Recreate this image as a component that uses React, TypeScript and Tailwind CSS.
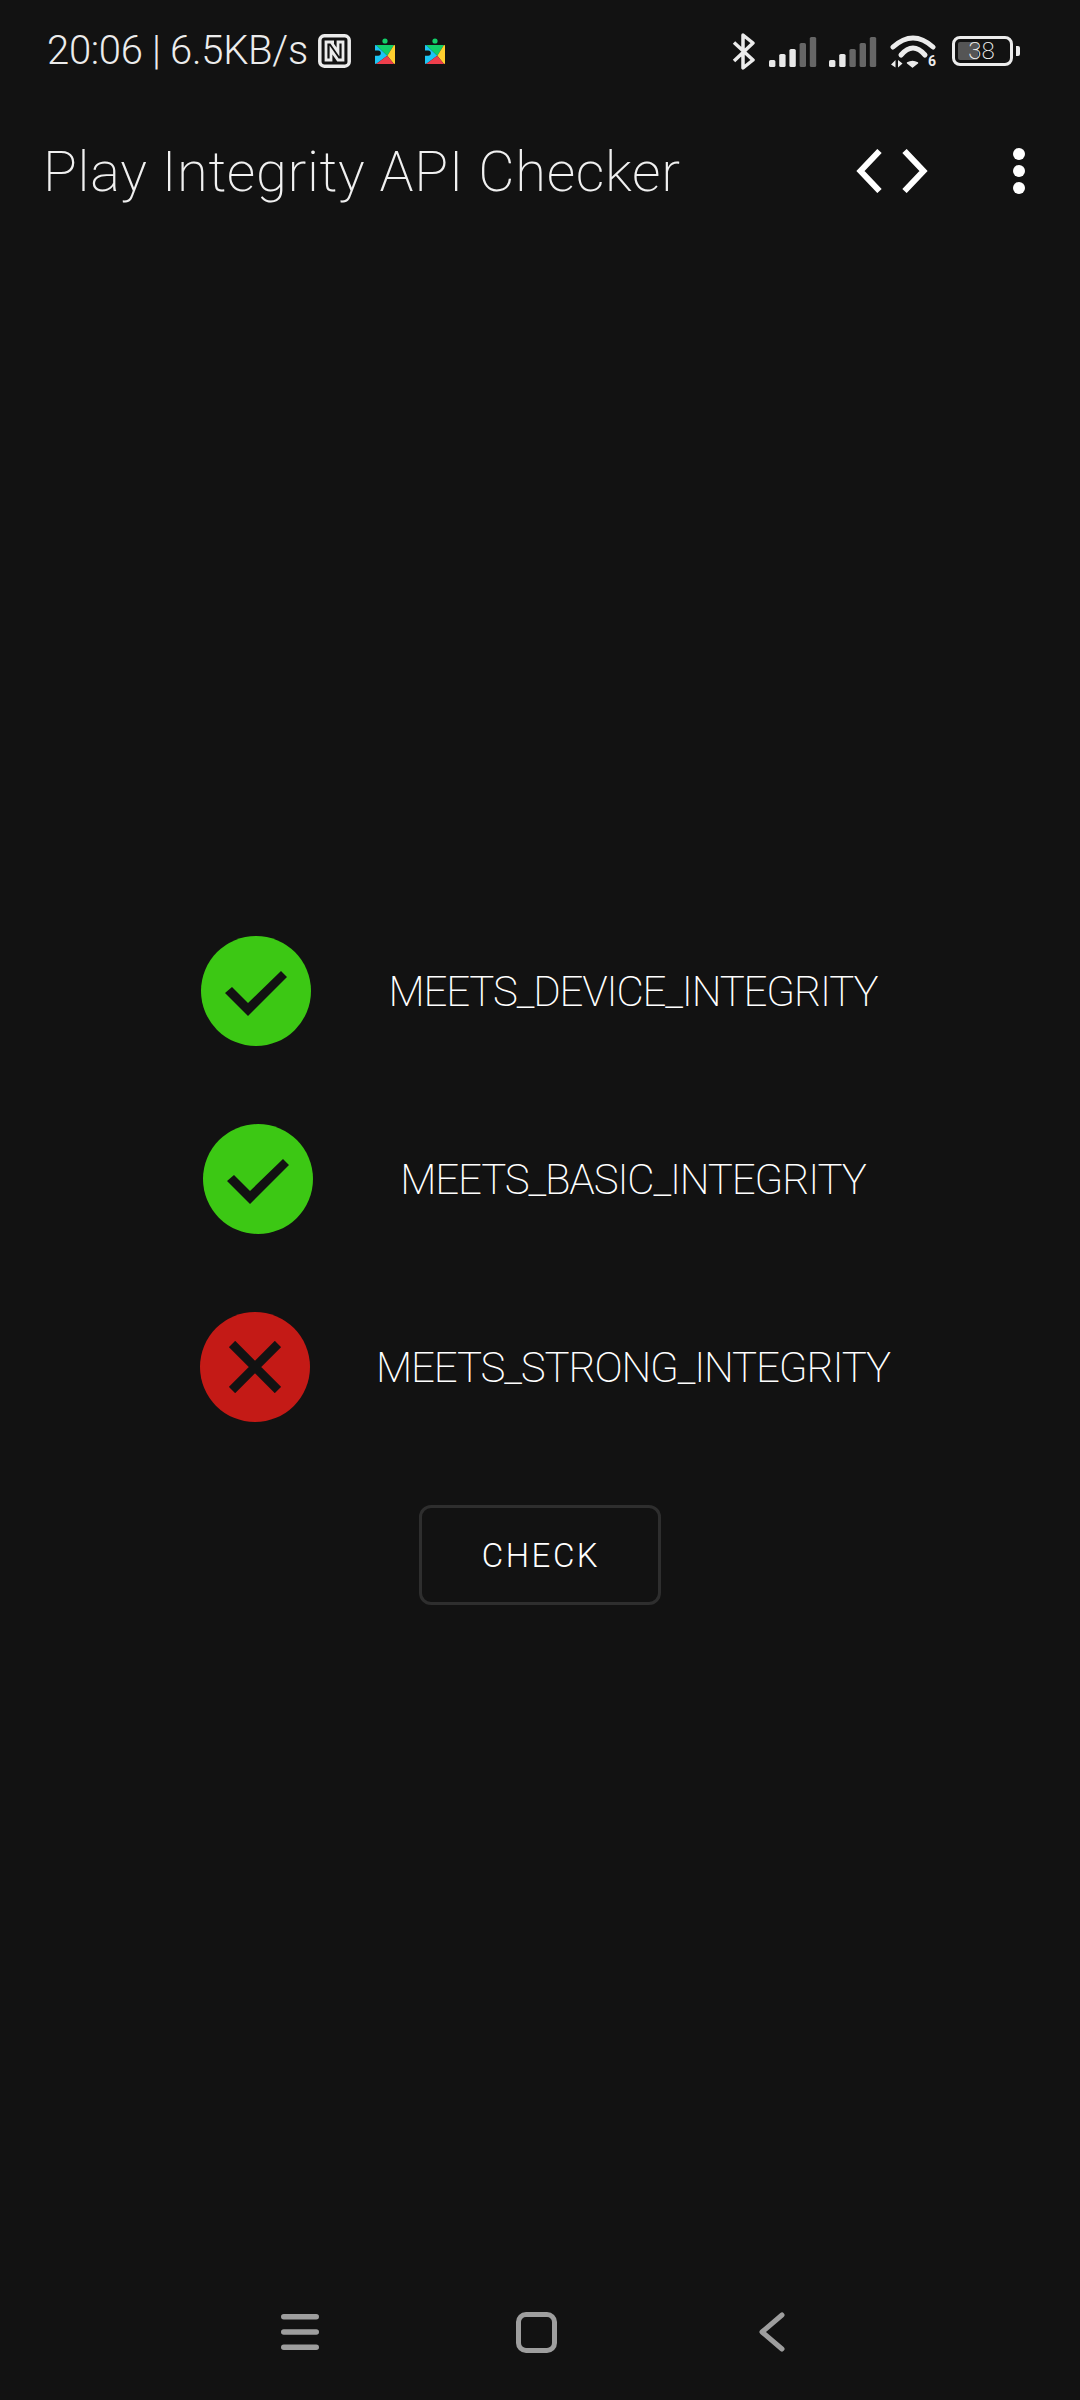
const rows = [
  { name: 'MEETS_DEVICE_INTEGRITY', ok: true, shift: 'ml-[1px] mr-[2px]' },
  { name: 'MEETS_BASIC_INTEGRITY', ok: true, shift: 'ml-[3px]' },
  { name: 'MEETS_STRONG_INTEGRITY', ok: false, shift: 'mr-[3px]' },
]

function PlayServices({ className }: { className: string }) {
  return (
    <svg viewBox="0 0 20 26" className={className}>
      <circle cx="10" cy="3" r="2.6" fill="#12cf68" />
      <path d="M1 7h18l-6.7 10.7z" fill="#12cf68" />
      <path d="M0 8c0-.6.4-1 1-1l11.3 10.7L1 26c-.6 0-1-.4-1-1z" fill="#1cc6f4" />
      <path d="M20 8c0-.6-.4-1-1-1l-6.700 10.700L19 26c.6 0 1-.4 1-1z" fill="#ffcf2e" />
      <path d="M12.300 17.700 1 26h18z" fill="#ee3f4c" />
      <path d="M0 12.500h3.200a2.600 2.600 0 0 1 2.600 2.600 2.600 2.600 0 0 1-2.600 2.600H0z" fill="#121212" />
    </svg>
  )
}

function Signal({ bright }: { bright: number }) {
  const heights = [7, 13, 18, 24, 30]
  return (
    <svg viewBox="0 0 48 31" className="w-[48px] h-[31px]">
      {heights.map((h, i) => (
        <rect
          key={i}
          x={i * 10.2}
          y={31 - h}
          width="6.4"
          height={h}
          rx="1.6"
          fill={i < bright ? '#e8e8e8' : '#666666'}
        />
      ))}
    </svg>
  )
}

function App() {
  return (
    <div className="relative flex flex-col w-[1080px] h-[2400px] bg-[#121212] text-white font-['Roboto',sans-serif]">
      {/* Status bar */}
      <div className="flex items-center justify-between h-[102px] pl-[47px] pr-[60px]">
        <div className="flex items-center">
          <span className="text-[40px] leading-none font-light tracking-[-0.3px] text-[#ececec] w-[271px]">20:06 | 6.5KB/s</span>
          <svg viewBox="0 0 33 34" className="w-[33px] h-[34px]" fill="none" stroke="#ececec">
            <rect x="1.800" y="1.800" width="29.400" height="30.400" rx="4.500" strokeWidth="3.500" />
            <path d="M16 8H8v18h5V16l7 10h5V8h-5v10L13 8" strokeWidth="2.800" />
          </svg>
          <PlayServices className="w-[20px] h-[26px] ml-[24px] -mt-[1px]" />
          <PlayServices className="w-[20px] h-[26px] ml-[30px] -mt-[1px]" />
        </div>
        <div className="flex items-center">
          <svg viewBox="0 0 23 37" className="w-[23px] h-[37px] mr-[14px]" fill="none" stroke="#ececec" strokeWidth="3.500">
            <path d="M2 9.500 21 27 11 35V2l10 8L2 28" strokeLinejoin="round" />
          </svg>
          <Signal bright={3} />
          <div className="ml-[12px]">
            <Signal bright={2} />
          </div>
          <div className="relative w-[46px] h-[33px] ml-[13px]">
            <svg viewBox="0 0 46 33" className="w-[46px] h-[33px]" fill="none" stroke="#ececec" strokeLinecap="round">
              <path d="M3 12Q23-6 43 12" strokeWidth="5" />
              <path d="M11 20Q23 6 35 20" strokeWidth="5" />
              <path d="M17.500 28Q22.500 25 27.500 28L22.500 32z" fill="#ececec" strokeWidth="1.500" strokeLinejoin="round" />
              <path d="M5.500 25v7.500L1 29.500zM8 32.500V25l4.500 3.500z" fill="#ececec" stroke="none" />
            </svg>
            <span className="absolute right-0 bottom-0 text-[14px] leading-none font-bold text-[#ececec]">6</span>
          </div>
          <div className="relative flex items-center justify-center w-[61px] h-[30px] ml-[16px] border-[3px] border-[#ececec] rounded-[8px]">
            <div className="absolute left-[3px] top-[3px] bottom-[3px] w-[20px] bg-[#555555] rounded-[2px]" />
            <span className="relative text-[24px] leading-none font-extralight text-[#f2f2f2] -ml-[2px]">38</span>
          </div>
          <div className="w-[4px] h-[10px] ml-[3px] bg-[#ececec] rounded-r-[2px]" />
        </div>
      </div>

      {/* Toolbar */}
      <div className="flex items-center h-[138px] pl-[43px]">
        <h1 className="flex-1 mt-[2px] text-[56px] leading-none font-extralight tracking-[0.65px] text-[#f0f0f0]">Play Integrity API Checker</h1>
        <svg viewBox="0 0 72 44" className="w-[72px] h-[44px] mr-[85px]" fill="none" stroke="#ffffff" strokeWidth="6">
          <path d="M23.500 2 4.500 22l19 20" />
          <path d="M48.500 2l19 20-19 20" />
        </svg>
        <div className="flex flex-col gap-[5px] mr-[55px]">
          <div className="w-[12px] h-[12px] rounded-full bg-white" />
          <div className="w-[12px] h-[12px] rounded-full bg-white" />
          <div className="w-[12px] h-[12px] rounded-full bg-white" />
        </div>
      </div>

      {/* Results */}
      <div className="flex flex-col gap-[78px] pt-[696px]">
        {rows.map((row) => (
          <div key={row.name} className="flex items-center pl-[200px]">
            <div className="w-[113px]">
              <div
                className={`flex items-center justify-center w-[110px] h-[110px] rounded-full ${row.shift} ${
                  row.ok ? 'bg-[#3cc814]' : 'bg-[#c41a16]'
                }`}
              >
                {row.ok ? (
                  <svg viewBox="0 0 62 45" className="w-[62px] h-[45px] mt-[5px]" fill="#121212">
                    <path d="M0 22 7 16 23 32 56 0 62 6 23 45z" />
                  </svg>
                ) : (
                  <svg viewBox="0 0 52 52" className="w-[52px] h-[52px]" fill="none" stroke="#121212" strokeWidth="9">
                    <path d="M3 3 49 49M49 3 3 49" />
                  </svg>
                )}
              </div>
            </div>
            <span className="w-[640px] mt-[1px] text-center text-[42px] leading-none font-extralight tracking-[-1.15px]">{row.name}</span>
          </div>
        ))}
      </div>

      {/* Check button */}
      <button className="self-center flex items-center justify-center w-[242px] h-[100px] mt-[83px] border-[3px] border-[#2e2e2e] rounded-[12px] text-[33px] leading-none font-light tracking-[2.5px] pl-[2px]">
        CHECK
      </button>

      {/* Navigation bar */}
      <div className="flex items-center mt-auto h-[136px] pl-[182px]">
        <div className="flex justify-center w-[236px]">
          <svg viewBox="0 0 38 36" className="w-[38px] h-[36px]" fill="#9e9e9e">
            <rect y="0" width="38" height="5.500" rx="2.750" />
            <rect y="15.250" width="38" height="5.500" rx="2.750" />
            <rect y="30.500" width="38" height="5.500" rx="2.750" />
          </svg>
        </div>
        <div className="flex justify-center w-[236px]">
          <div className="w-[41px] h-[41px] border-[5px] border-[#9e9e9e] rounded-[10px]" />
        </div>
        <div className="flex justify-center w-[236px]">
          <svg viewBox="0 0 26 40" className="w-[26px] h-[40px]" fill="none" stroke="#9e9e9e" strokeWidth="5" strokeLinecap="round" strokeLinejoin="round">
            <path d="M23 3 3 20l20 17" />
          </svg>
        </div>
      </div>
    </div>
  )
}

export default App
